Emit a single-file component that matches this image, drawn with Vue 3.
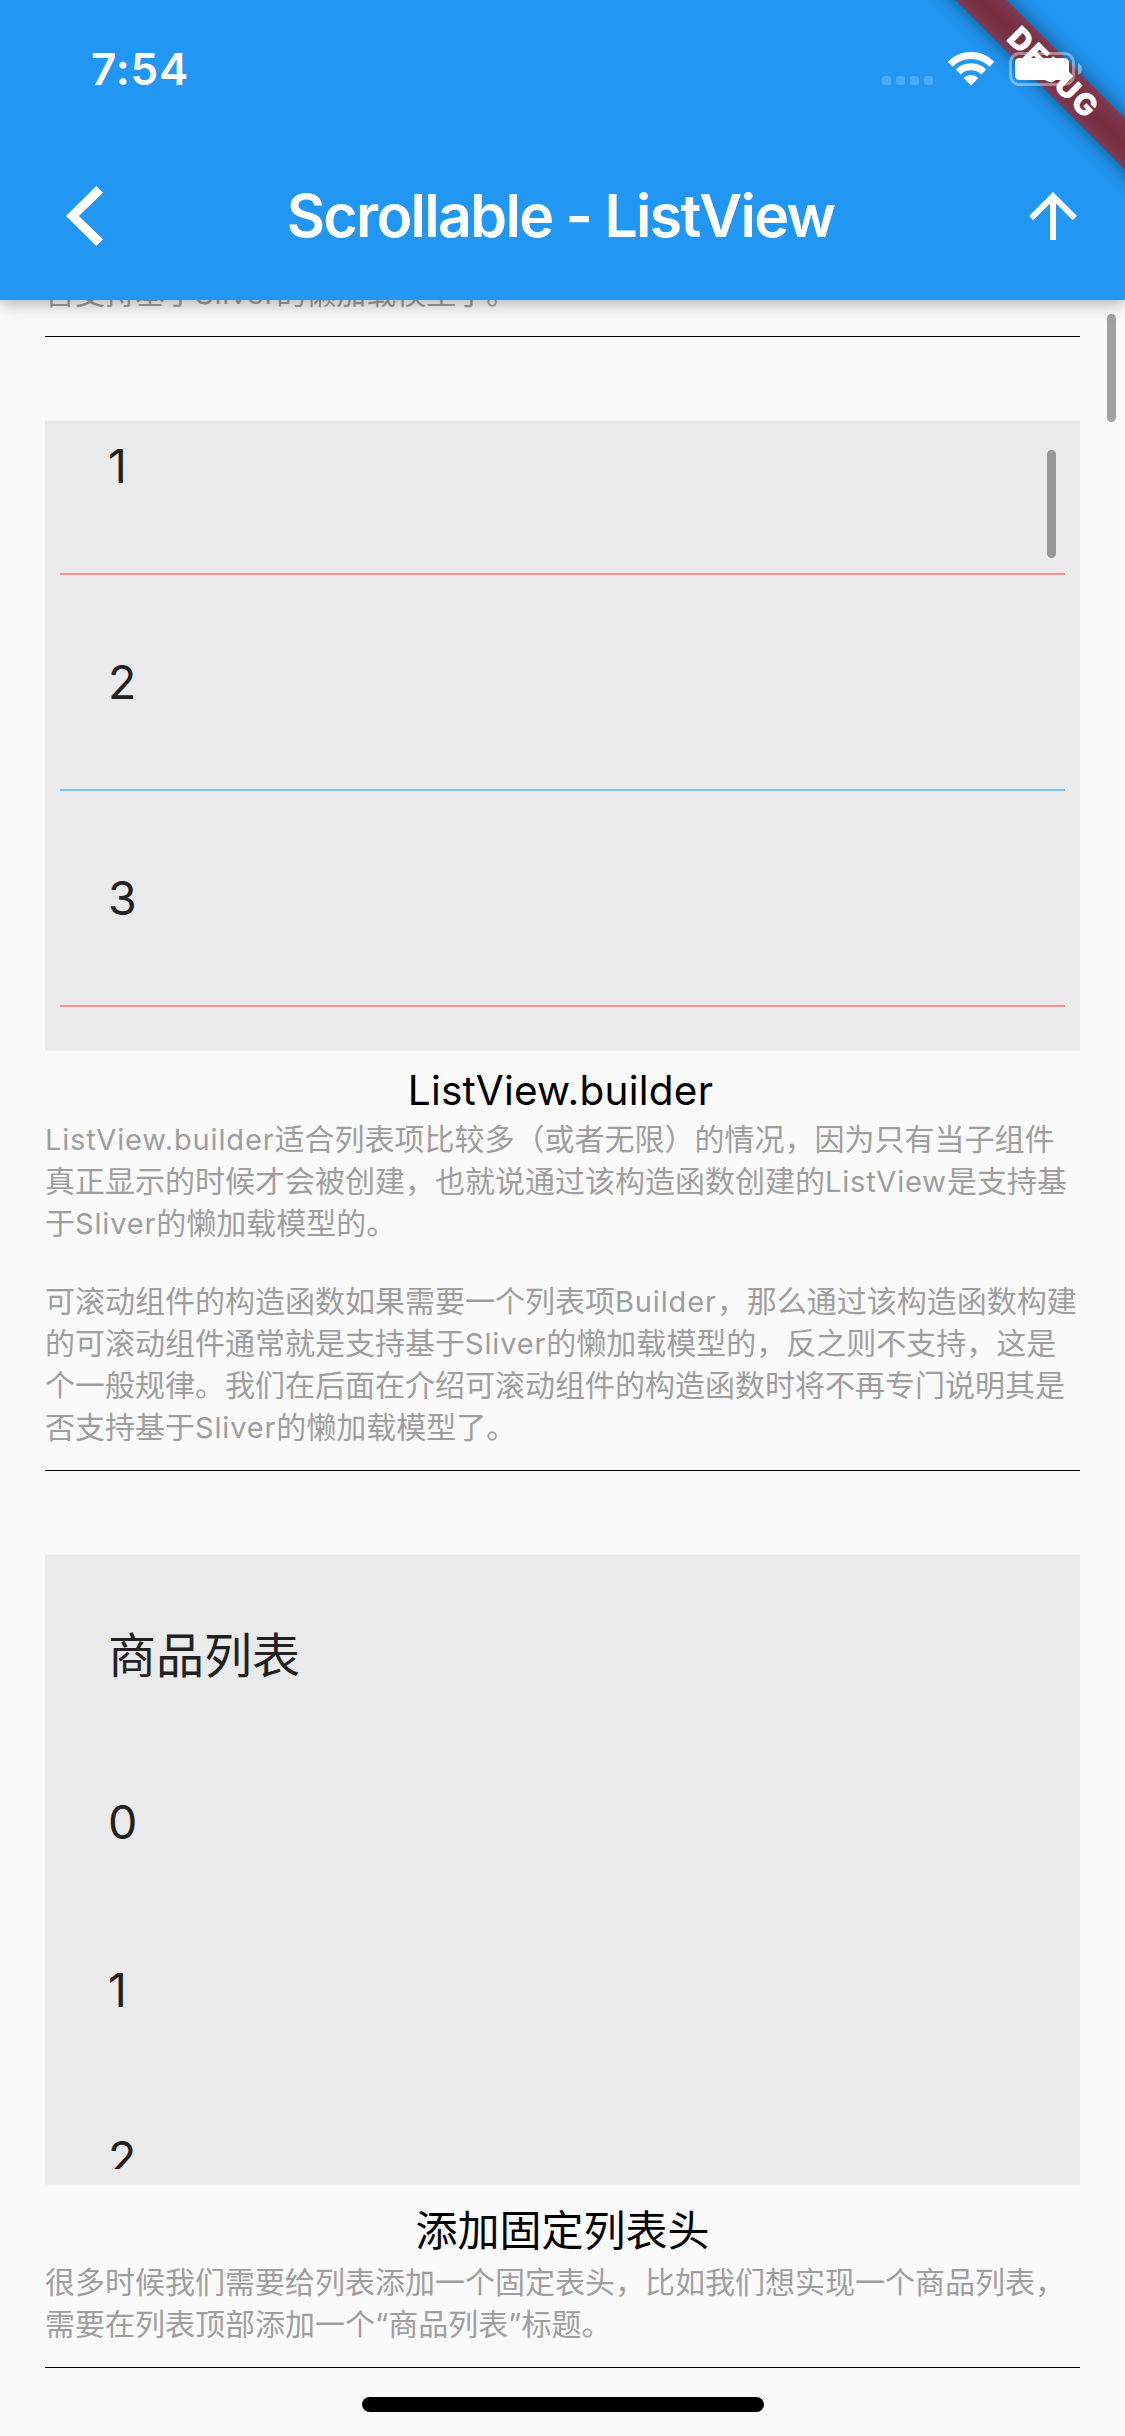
<script setup>
const numbers = [
  { label: '1', tone: 'red' },
  { label: '2', tone: 'blue' },
  { label: '3', tone: 'red' },
]

const goods = ['商品列表', '0', '1', '2']

const previousTail = '否支持基于Sliver的懒加载模型了。'

const builderText = [
  [
    'ListView.builder适合列表项比较多（或者无限）的情况，因为只有当子组件',
    '真正显示的时候才会被创建，也就说通过该构造函数创建的ListView是支持基',
    '于Sliver的懒加载模型的。',
  ],
  [
    '可滚动组件的构造函数如果需要一个列表项Builder，那么通过该构造函数构建',
    '的可滚动组件通常就是支持基于Sliver的懒加载模型的，反之则不支持，这是',
    '个一般规律。我们在后面在介绍可滚动组件的构造函数时将不再专门说明其是',
    '否支持基于Sliver的懒加载模型了。',
  ],
]

const headerText = [
  [
    '很多时候我们需要给列表添加一个固定表头，比如我们想实现一个商品列表，',
    '需要在列表顶部添加一个“商品列表”标题。',
  ],
]

// Latin runs get their own tracking, so lines are split into runs
const runs = (line) =>
  line
    .split(/([A-Za-z.]+)/)
    .filter(Boolean)
    .map((text) => ({ text, latin: /^[A-Za-z]/.test(text) }))
</script>

<template>
  <div class="screen">
    <header class="app-bar">
      <div class="status-bar">
        <span class="time">7:54</span>
        <div class="signals">
          <div class="cell"><i v-for="n in 4" :key="n"></i></div>
          <svg class="wifi" width="46" height="34" viewBox="948 52 46 34">
            <path d="M950.2 64.2a29.5 29.5 0 0 1 41.6 0" />
            <path d="M958.1 72.1a18.3 18.3 0 0 1 25.8 0" />
            <path class="dot" d="M971 85.4l-7.4-7.4a10.5 10.5 0 0 1 14.8 0z" />
          </svg>
        </div>
      </div>
      <div class="toolbar">
        <svg class="back" width="38" height="60" viewBox="0 0 38 60">
          <path d="M30.3 0L37 6.8 12.8 30 37 53.2 30.3 60 0 30z" />
        </svg>
        <h1>Scrollable - ListView</h1>
        <svg class="up" width="72" height="72" viewBox="0 0 24 24">
          <path d="M4 12l1.41 1.41L11 7.83V20h2V7.83l5.58 5.59L20 12l-8-8-8 8z" />
        </svg>
      </div>
    </header>

    <main class="content">
      <section class="previous">
        <p class="line">
          <span v-for="(r, i) in runs(previousTail)" :key="i" :class="{ latin: r.latin }">{{ r.text }}</span>
        </p>
      </section>

      <section>
        <div class="box">
          <div class="viewport">
            <ul class="numbers">
              <li v-for="n in numbers" :key="n.label" :class="n.tone">{{ n.label }}</li>
            </ul>
          </div>
          <div class="thumb inner"></div>
        </div>
        <h2 class="latin-caption">ListView.builder</h2>
        <div class="description">
          <div v-for="(block, b) in builderText" :key="b">
            <p v-for="line in block" :key="line" class="line">
              <span v-for="(r, i) in runs(line)" :key="i" :class="{ latin: r.latin }">{{ r.text }}</span>
            </p>
          </div>
        </div>
      </section>

      <section>
        <div class="box">
          <div class="viewport">
            <ul class="goods">
              <li v-for="g in goods" :key="g">{{ g }}</li>
            </ul>
          </div>
        </div>
        <h2 class="cjk-caption">添加固定列表头</h2>
        <div class="description">
          <div v-for="(block, b) in headerText" :key="b">
            <p v-for="line in block" :key="line" class="line">
              <span v-for="(r, i) in runs(line)" :key="i" :class="{ latin: r.latin }">{{ r.text }}</span>
            </p>
          </div>
        </div>
      </section>
    </main>

    <div class="thumb outer"></div>
    <div class="home-indicator"></div>

    <div class="banner">
      <div class="banner-shadow"></div>
      <div class="banner-band">DEBUG</div>
    </div>
    <svg class="battery" width="74" height="34" viewBox="0 0 74 34">
      <rect x="1.5" y="1.5" width="63" height="31" rx="9" fill="none" stroke="#fff" stroke-opacity=".4" stroke-width="3" />
      <rect x="6" y="6" width="54" height="22" rx="4.5" fill="#fff" />
      <path d="M69 11c5.200 2 5.200 10 0 12z" fill="#fff" fill-opacity=".45" />
    </svg>
  </div>
</template>

<style>
body {
  margin: 0;
}
</style>

<style scoped>
.screen {
  position: relative;
  display: flex;
  flex-direction: column;
  width: 1125px;
  height: 2436px;
  overflow: hidden;
  background: #fafafa;
  color: #212121;
  font-family: Inter, "Noto Sans CJK SC", sans-serif;
  text-spacing-trim: space-all;
}
h1, h2, p, ul {
  margin: 0;
  padding: 0;
  font-weight: 400;
  list-style: none;
}

/* App bar */
.app-bar {
  position: relative;
  z-index: 1;
  flex: none;
  height: 300px;
  background: #2196f3;
  color: #fff;
  box-shadow: 0 3px 12px rgba(0, 0, 0, .16), 0 6px 18px rgba(0, 0, 0, .14);
}
.status-bar {
  display: flex;
  justify-content: space-between;
  height: 132px;
  padding: 0 131px 0 91px;
}
.time {
  padding-top: 42px;
  font-size: 44px;
  line-height: 54px;
  font-weight: 600;
  letter-spacing: .8px;
}
.signals {
  display: flex;
  align-items: flex-start;
  gap: 15px;
  padding-top: 52px;
}
.cell {
  display: flex;
  gap: 5px;
  padding-top: 24px;
}
.cell i {
  width: 9px;
  height: 9px;
  border-radius: 2.5px;
  background: rgba(255, 255, 255, .2);
}
.wifi path {
  fill: none;
  stroke: #fff;
  stroke-width: 7;
}
.wifi .dot {
  fill: #fff;
  stroke: none;
}
.toolbar {
  display: flex;
  align-items: center;
  justify-content: space-between;
  height: 168px;
  padding: 0 36px 0 66px;
}
.toolbar path {
  fill: #fff;
}
h1 {
  font-size: 59px;
  line-height: 72px;
  font-weight: 600;
  letter-spacing: -1.7px;
  white-space: nowrap;
}

/* Page */
.content {
  flex: 1;
  overflow: hidden;
  padding: 0 45px;
}
section {
  padding-bottom: 22px;
  border-bottom: 1px solid #000;
}
section + section {
  padding-top: 83px;
}
.previous {
  margin-top: -28px;
}
.box {
  position: relative;
  box-sizing: border-box;
  height: 631px;
  padding: 15px 14px 15px 15px;
  border-top: 1px solid #f2f2f2;
  border-bottom: 1px solid #f5f5f5;
  background: #eaeaea;
  background-clip: padding-box;
}
.viewport {
  height: 599px;
  overflow: hidden;
}
.numbers {
  margin-top: -77px;
}
.numbers li,
.goods li {
  display: flex;
  align-items: center;
  padding-left: 48px;
  font-size: 46.500px;
}
.numbers li {
  height: 214px;
  margin-right: 1px;
  border-bottom: 2px solid;
}
.numbers .red { border-color: #f29590; }
.numbers .blue { border-color: #80bff1; }
.goods li {
  height: 168px;
}
.goods li:first-child {
  box-sizing: border-box;
  padding-bottom: 5px;
  font-size: 48px;
}

h2 {
  color: #000;
  text-align: center;
  white-space: nowrap;
}
.latin-caption {
  height: 67px;
  padding-right: 4px;
  font-size: 40.500px;
  line-height: 80px;
  letter-spacing: .25px;
}
.cjk-caption {
  height: 76px;
  font-size: 42px;
  line-height: 91px;
}
.description {
  display: flex;
  flex-direction: column;
  gap: 36px;
}
.line {
  height: 42px;
  color: #9e9e9e;
  font-size: 30px;
  line-height: 42px;
  white-space: nowrap;
}
.latin {
  font-size: 29px;
  letter-spacing: .85px;
}

/* Overlays */
.thumb {
  position: absolute;
  width: 9px;
  height: 108px;
  border-radius: 5px;
}
.inner {
  top: 29px;
  right: 24px;
  background: #979797;
}
.outer {
  top: 314px;
  right: 9px;
  background: #a1a1a1;
}
.home-indicator {
  position: absolute;
  left: 362px;
  bottom: 24px;
  width: 402px;
  height: 15px;
  border-radius: 8px;
  background: #000;
}
.banner {
  position: absolute;
  z-index: 2;
  top: 0;
  right: 0;
  width: 300px;
  height: 300px;
  overflow: hidden;
}
.banner-shadow,
.banner-band {
  position: absolute;
  top: 54px;
  right: -128px;
  width: 400px;
  height: 36px;
  transform: rotate(45deg);
}
.banner-shadow {
  background: rgba(0, 0, 0, .5);
  filter: blur(10px);
}
.banner-band {
  background: rgba(183, 28, 28, .627);
  color: #fff;
  font-size: 30.500px;
  line-height: 36px;
  font-weight: 900;
  letter-spacing: 1.8px;
  text-indent: 1.8px;
  text-align: center;
}
.battery {
  position: absolute;
  z-index: 3;
  top: 52px;
  right: 42px;
}
</style>
